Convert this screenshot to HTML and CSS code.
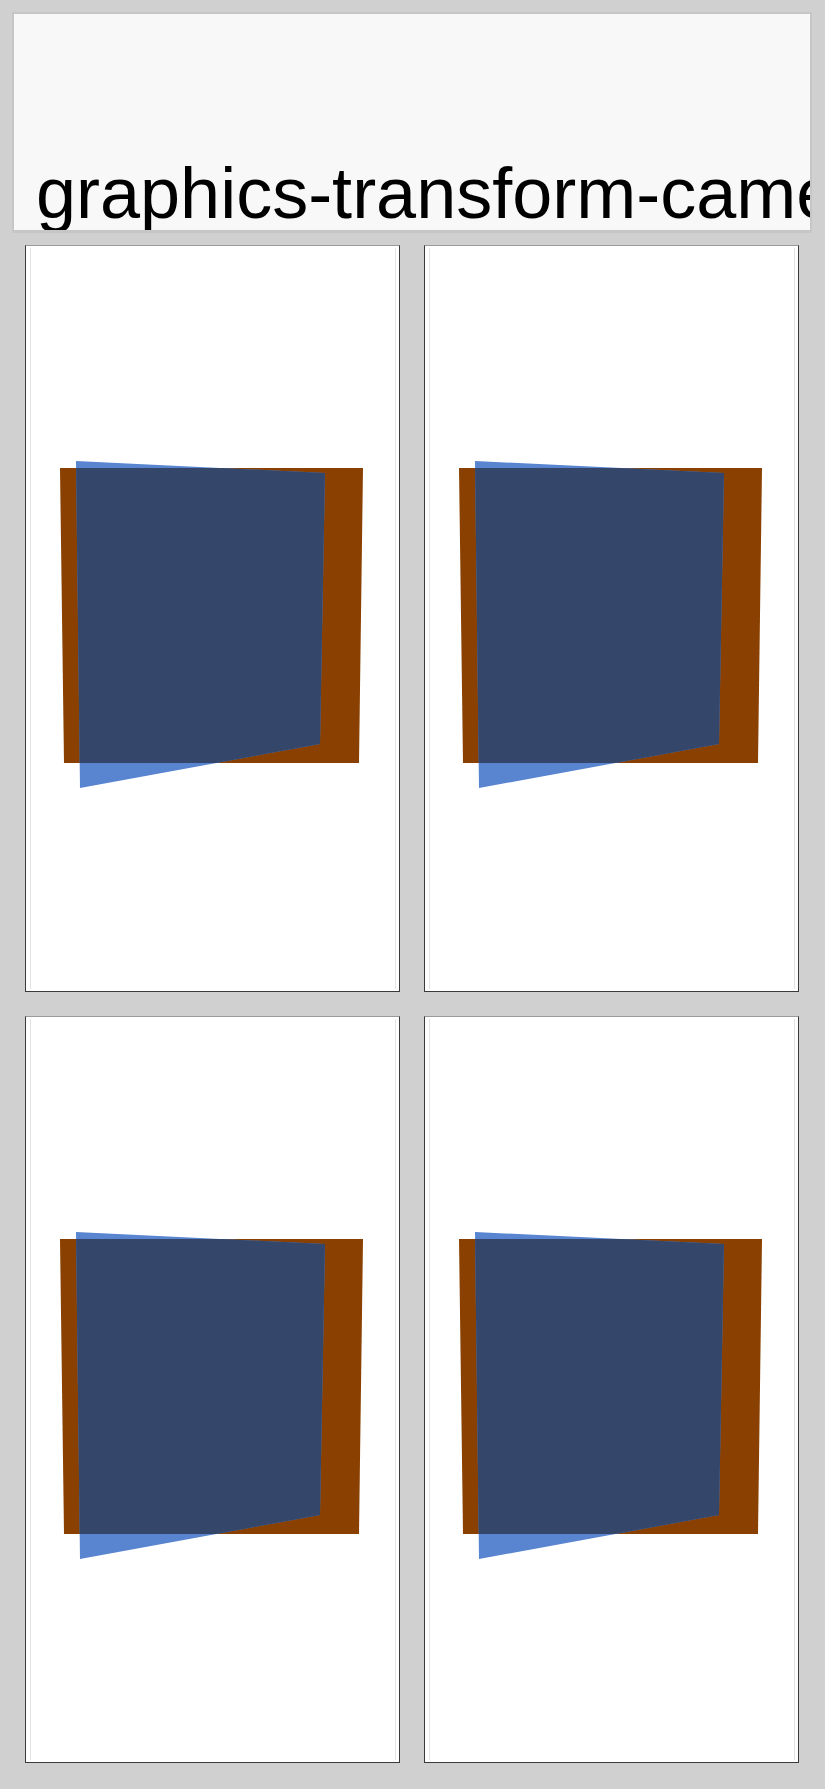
FILE: index.html
```html
<!DOCTYPE html>
<html>
<head>
<meta charset="utf-8">
<link rel="stylesheet" href="styles.css">
</head>
<body>
<header class="title-bar"><h1 class="title">graphics-transform-camera</h1></header>
<main class="grid">
  <div class="card"><div class="inner"></div>
    <svg class="scene" viewBox="0 0 375 747" preserveAspectRatio="none">
      <defs><clipPath id="c1"><polygon points="35,223 338,223 334,518 39,518"/></clipPath></defs>
      <polygon class="orange" points="35,223 338,223 334,518 39,518"/>
      <polygon class="blue" points="51,216 300,228 295,499 55,543"/>
      <polygon class="overlap" clip-path="url(#c1)" points="51,216 300,228 295,499 55,543"/>
    </svg>
  </div>
  <div class="card"><div class="inner"></div>
    <svg class="scene" viewBox="0 0 375 747" preserveAspectRatio="none">
      <defs><clipPath id="c2"><polygon points="35,223 338,223 334,518 39,518"/></clipPath></defs>
      <polygon class="orange" points="35,223 338,223 334,518 39,518"/>
      <polygon class="blue" points="51,216 300,228 295,499 55,543"/>
      <polygon class="overlap" clip-path="url(#c2)" points="51,216 300,228 295,499 55,543"/>
    </svg>
  </div>
  <div class="card"><div class="inner"></div>
    <svg class="scene" viewBox="0 0 375 747" preserveAspectRatio="none">
      <defs><clipPath id="c3"><polygon points="35,223 338,223 334,518 39,518"/></clipPath></defs>
      <polygon class="orange" points="35,223 338,223 334,518 39,518"/>
      <polygon class="blue" points="51,216 300,228 295,499 55,543"/>
      <polygon class="overlap" clip-path="url(#c3)" points="51,216 300,228 295,499 55,543"/>
    </svg>
  </div>
  <div class="card"><div class="inner"></div>
    <svg class="scene" viewBox="0 0 375 747" preserveAspectRatio="none">
      <defs><clipPath id="c4"><polygon points="35,223 338,223 334,518 39,518"/></clipPath></defs>
      <polygon class="orange" points="35,223 338,223 334,518 39,518"/>
      <polygon class="blue" points="51,216 300,228 295,499 55,543"/>
      <polygon class="overlap" clip-path="url(#c4)" points="51,216 300,228 295,499 55,543"/>
    </svg>
  </div>
</main>
</body>
</html>
```
FILE: styles.css
```css
html, body {
  margin: 0;
  padding: 0;
}
body {
  background: #d0d0d0;
  padding: 12px 13px 25px 12px;
  font-family: "Liberation Sans", Arial, sans-serif;
}
.title-bar {
  box-sizing: border-box;
  height: 221px;
  background: #f8f8f8;
  border: 2px solid #c6c6c6;
  border-bottom-width: 3px;
  display: flex;
  align-items: flex-end;
  overflow: hidden;
  padding-left: 22px;
}
.title {
  margin: 0;
  font-weight: normal;
  font-size: 72px;
  line-height: 80px;
  white-space: nowrap;
  color: #000;
  transform: translateY(3px);
}
.grid {
  margin: 12px 13px 0 13px;
  display: grid;
  grid-template-columns: 375px 375px;
  grid-auto-rows: 747px;
  column-gap: 24px;
  row-gap: 24px;
}
.card {
  position: relative;
  box-sizing: border-box;
  background: #fff;
  border: 1px solid #3a3a3a;
  border-top-color: #9a9a9a;
}
.inner {
  position: absolute;
  inset: 2px 3px 2px 4px;
  border-left: 1px solid #e4e4e4;
  border-right: 1px solid #e4e4e4;
}
.scene {
  position: absolute;
  left: -1px;
  top: -1px;
  width: 375px;
  height: 747px;
}
.orange { fill: #8a4000; }
.blue { fill: #5884d0; }
.overlap { fill: #34466a; }
```
